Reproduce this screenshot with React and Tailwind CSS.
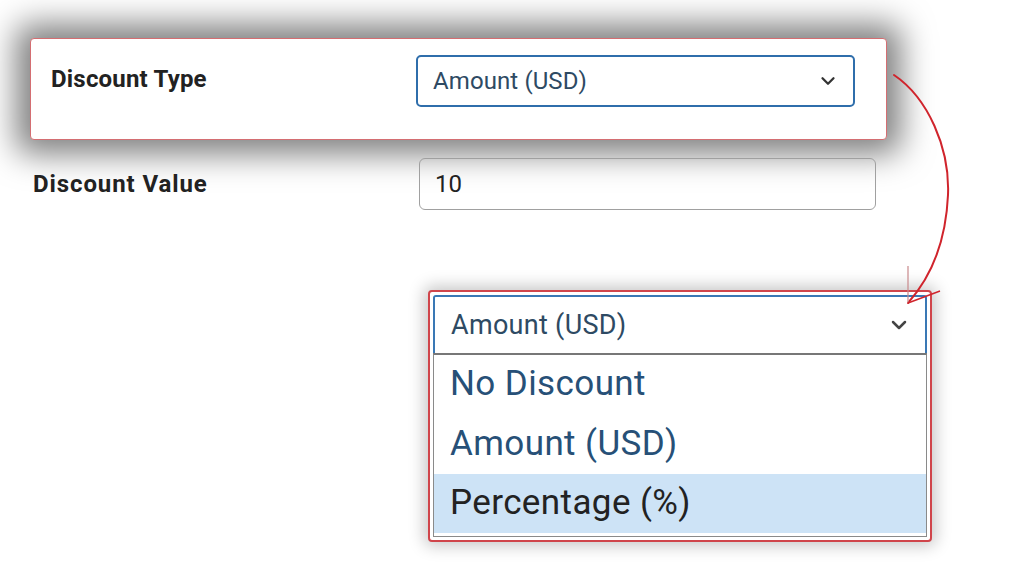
import { ChevronDown } from 'lucide-react'

const opcoes = ['No Discount', 'Amount (USD)', 'Percentage (%)']

function Seta() {
  return (
    <svg className="absolute left-0 top-0 pointer-events-none" width="1024" height="576" viewBox="0 0 1024 576">
      <path d="M894 75 C 928 98, 950 148, 948 195 C 946 240, 932 276, 908 303" fill="none" stroke="#d0242c" strokeWidth="2" strokeLinecap="round" />
      <path d="M908 303 L 908 266" stroke="#c8898b" strokeWidth="1.2" fill="none" />
      <path d="M908 303 L 940 291" stroke="#d0242c" strokeWidth="1.5" fill="none" />
    </svg>
  )
}

export default function App() {
  return (
    <div className="relative w-[1024px] h-[576px] bg-white overflow-hidden font-['Roboto',sans-serif]">
      <div className="ml-[30px] mt-[38px] w-[857px] h-[102px] bg-white border border-[#d46e72] rounded-[4px] shadow-[0_0_32px_14px_rgba(0,0,0,0.5)] flex items-start">
        <p className="ml-[20px] mt-[28px] w-[365px] text-[24px] font-bold text-[#222] leading-6 tracking-[0.2px]">Discount Type</p>
        <div className="mt-[16px] w-[439px] h-[52px] border-2 border-[#2f6eab] rounded-[5px] flex items-center justify-between pl-[15px] pr-[14px]">
          <span className="text-[24px] text-[#2e4a63] tracking-[0.1px]">Amount (USD)</span>
          <ChevronDown size={22} strokeWidth={2.5} className="text-[#333]" />
        </div>
      </div>

      <div className="flex items-center mt-[18px]">
        <p className="ml-[33px] w-[386px] text-[24px] font-bold text-[#222] tracking-[0.9px]">Discount Value</p>
        <div className="w-[457px] h-[52px] border border-[#a0a0a0] rounded-[6px] flex items-center pl-[15px]">
          <span className="text-[24px] text-[#222]">10</span>
        </div>
      </div>

      <div className="ml-[428px] mt-[80px] w-[504px] h-[252px] border-2 border-[#d0454b] rounded-[4px] shadow-[0_0_16px_4px_rgba(0,0,0,0.22)] p-[3px] flex flex-col bg-white">
        <div className="h-[58px] border-2 border-b-0 border-[#3a78b5] rounded-t-[3px] flex items-center justify-between pl-[16px] pr-[14px]">
          <span className="text-[27px] text-[#2e4a63] tracking-[0.3px]">Amount (USD)</span>
          <ChevronDown size={24} strokeWidth={2.5} className="text-[#444]" />
        </div>
        <div className="flex-1 border border-t-2 border-[#8a8a8a] border-t-[#777] flex flex-col pb-[3px]">
          {opcoes.map((o, i) => (
            <div key={o} className={`flex-1 flex items-center pl-[16px] text-[35px] tracking-[0.4px] ${i === 2 ? 'bg-[#cde3f6] text-[#222]' : 'text-[#275077]'}`}>
              {o}
            </div>
          ))}
        </div>
      </div>

      <Seta />
    </div>
  )
}
